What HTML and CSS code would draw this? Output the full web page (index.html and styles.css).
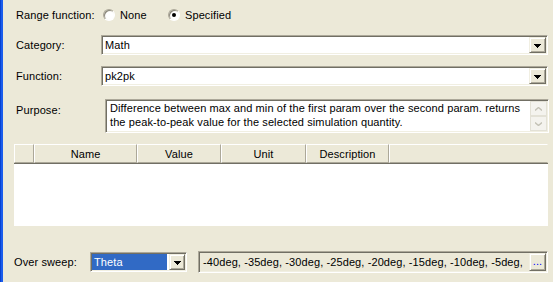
FILE: index.html
```html
<!DOCTYPE html>
<html>
<head>
<meta charset="utf-8">
<link rel="stylesheet" href="styles.css">
</head>
<body>
<div class="window">
  <div class="edge"></div>
  <div class="content">
    <div class="row row-range">
      <span class="label label-range">Range function:</span>
      <span class="opt opt-none"><span class="radio"></span>None</span>
      <span class="opt"><span class="radio checked"></span>Specified</span>
    </div>

    <div class="row row-combo row-category">
      <span class="label label-combo">Category:</span>
      <div class="combo">
        <span class="combo-text">Math</span>
        <span class="drop"><svg width="7" height="4" viewBox="0 0 7 4"><path d="M0 0h7v1h-1v1h-1v1h-1v1h-1v-1h-1v-1h-1v-1h-1z" fill="#000"/></svg></span>
      </div>
    </div>

    <div class="row row-combo row-function">
      <span class="label label-combo">Function:</span>
      <div class="combo">
        <span class="combo-text">pk2pk</span>
        <span class="drop"><svg width="7" height="4" viewBox="0 0 7 4"><path d="M0 0h7v1h-1v1h-1v1h-1v1h-1v-1h-1v-1h-1v-1h-1z" fill="#000"/></svg></span>
      </div>
    </div>

    <div class="row row-purpose">
      <span class="label label-purpose">Purpose:</span>
      <div class="memo">
        <div class="memo-text">Difference between max and min of the first param over the second param. returns the peak-to-peak value for the selected simulation quantity.</div>
        <div class="vscroll">
          <span class="sbtn"><svg width="7" height="4" viewBox="0 0 7 4"><path d="M0 3.5L3.5 0.5L7 3.5" fill="none" stroke="#c4c2b6" stroke-width="1.4"/></svg></span>
          <span class="sbtn"><svg width="7" height="4" viewBox="0 0 7 4"><path d="M0 0.5L3.5 3.5L7 0.5" fill="none" stroke="#c4c2b6" stroke-width="1.4"/></svg></span>
        </div>
      </div>
    </div>

    <div class="grid">
      <div class="grid-head">
        <span class="hcell c0"></span>
        <span class="hcell c1">Name</span>
        <span class="hcell c2">Value</span>
        <span class="hcell c3">Unit</span>
        <span class="hcell c4">Description</span>
        <span class="hcell c5"></span>
      </div>
      <div class="grid-body"></div>
    </div>

    <div class="row row-sweep">
      <span class="label label-sweep">Over sweep:</span>
      <div class="combo combo-small">
        <span class="combo-sel">Theta</span>
        <span class="drop drop-small"><svg width="7" height="4" viewBox="0 0 7 4"><path d="M0 0h7v1h-1v1h-1v1h-1v1h-1v-1h-1v-1h-1v-1h-1z" fill="#000"/></svg></span>
      </div>
      <div class="values">
        <span class="values-text">-40deg, -35deg, -30deg, -25deg, -20deg, -15deg, -10deg, -5deg,</span>
        <span class="dots">...</span>
      </div>
    </div>
  </div>
</div>
</body>
</html>
```

FILE: styles.css
```css
html, body {
  margin: 0;
  padding: 0;
}
body {
  background: #ECE9D8;
  font-family: "Liberation Sans", Arial, sans-serif;
  font-size: 11px;
  letter-spacing: 0.1px;
  color: #000;
}
.window {
  display: flex;
  width: 553px;
  height: 282px;
  overflow: hidden;
}
.edge {
  width: 3px;
  flex: none;
  background: linear-gradient(to right, #0842D0 0 1px, #1A5CEC 1px 3px);
}
.content {
  flex: 1;
  display: flex;
  flex-direction: column;
  padding: 0 5px 0 13px;
  min-width: 0;
}
.row {
  display: flex;
  align-items: center;
}
.label {
  flex: none;
  white-space: nowrap;
}
.row-range {
  height: 30px;
}
.label-range {
  width: 87px;
}
.opt {
  display: flex;
  align-items: center;
  gap: 5px;
}
.opt-none {
  width: 65px;
}
.radio {
  box-sizing: border-box;
  width: 12px;
  height: 12px;
  border-radius: 50%;
  border: 1px solid;
  border-color: #ACA899 #FFFFFF #FFFFFF #ACA899;
  background: radial-gradient(circle at 60% 60%, #ffffff 0 40%, #ebe9e0 100%);
  box-shadow: inset 1px 1px 0 #8a877b;
  display: flex;
  align-items: center;
  justify-content: center;
}
.radio.checked::after {
  content: "";
  width: 4px;
  height: 4px;
  border-radius: 50%;
  background: #000;
}

.row-combo {
  height: 20px;
}
.row-category {
  margin-top: 5px;
}
.row-function {
  margin-top: 11px;
}
.label-combo {
  width: 85px;
}
.combo {
  box-sizing: border-box;
  flex: 1;
  height: 20px;
  display: flex;
  border: 1px solid;
  border-color: #ACA899 #FFFFFF #FFFFFF #ACA899;
  box-shadow: inset 1px 1px 0 #716F64, inset -1px -1px 0 #F1EFE2;
  background: #fff;
  padding: 1px;
}
.combo-text {
  flex: 1;
  padding-left: 2px;
  line-height: 16px;
}
.drop {
  box-sizing: border-box;
  width: 17px;
  flex: none;
  display: flex;
  align-items: center;
  justify-content: center;
  background: #ECE9D8;
  border: 1px solid;
  border-color: #F1EFE2 #716F64 #716F64 #F1EFE2;
  box-shadow: inset 1px 1px 0 #FFFFFF, inset -1px -1px 0 #ACA899;
}
.drop svg {
  display: block;
  margin-top: 1px;
}

.row-purpose {
  margin-top: 13px;
  height: 34px;
  align-items: flex-start;
}
.label-purpose {
  width: 89px;
  padding-top: 5px;
  line-height: 13px;
}
.memo {
  box-sizing: border-box;
  flex: 1;
  height: 34px;
  margin-right: -1px;
  display: flex;
  border: 1px solid;
  border-color: #ACA899 #FFFFFF #FFFFFF #ACA899;
  box-shadow: inset 1px 1px 0 #716F64, inset -1px -1px 0 #F1EFE2;
  background: #fff;
  padding: 1px;
}
.memo-text {
  flex: 1;
  padding: 0 2px 0 3px;
  line-height: 14px;
}
.vscroll {
  width: 17px;
  flex: none;
  display: flex;
  flex-direction: column;
}
.sbtn {
  box-sizing: border-box;
  flex: 1;
  display: flex;
  align-items: center;
  justify-content: center;
  background: #F4F3EE;
  border: 1px solid #E3E1D6;
}
.sbtn svg {
  display: block;
}

.grid {
  margin-top: 11px;
  margin-left: -2px;
  height: 82px;
  display: flex;
  flex-direction: column;
}
.grid-head {
  height: 20px;
  display: flex;
  box-sizing: border-box;
  border-bottom: 1px solid #716F64;
}
.hcell {
  box-sizing: border-box;
  height: 19px;
  display: flex;
  align-items: center;
  justify-content: center;
  border-left: 1px solid #FFFFFF;
  border-top: 1px solid #FFFFFF;
  border-right: 1px solid #ACA899;
  border-bottom: 1px solid #ACA899;
  background: #ECE9D8;
  flex: none;
}
.c0 { width: 20px; }
.c1 { width: 103px; }
.c2 { width: 84px; }
.c3 { width: 85px; }
.c4 { width: 83px; }
.c5 { flex: 1; border-right-color: #ECE9D8; }
.grid-body {
  flex: 1;
  background: #fff;
}

.row-sweep {
  margin-top: 25px;
  margin-left: -2px;
  height: 22px;
}
.label-sweep {
  width: 76px;
}
.combo-small {
  flex: none;
  width: 97px;
}
.combo-sel {
  flex: 1;
  background: #316AC5;
  color: #fff;
  padding-left: 2px;
  line-height: 16px;
  margin-right: 2px;
}
.drop-small {
  width: 16px;
}
.values {
  box-sizing: border-box;
  flex: 1;
  margin-left: 11px;
  height: 22px;
  display: flex;
  border: 1px solid;
  border-color: #ACA899 #FFFFFF #FFFFFF #ACA899;
  box-shadow: inset 1px 1px 0 #716F64, inset -1px -1px 0 #F1EFE2;
  padding: 1px;
}
.values-text {
  flex: 1;
  padding-left: 3px;
  line-height: 18px;
  white-space: nowrap;
  overflow: hidden;
}
.dots {
  box-sizing: border-box;
  width: 17px;
  flex: none;
  display: flex;
  align-items: flex-end;
  justify-content: center;
  color: #0000FF;
  line-height: 12px;
  padding-bottom: 3px;
  background: #ECE9D8;
  border: 1px solid;
  border-color: #F1EFE2 #716F64 #716F64 #F1EFE2;
  box-shadow: inset 1px 1px 0 #FFFFFF, inset -1px -1px 0 #ACA899;
}
```
